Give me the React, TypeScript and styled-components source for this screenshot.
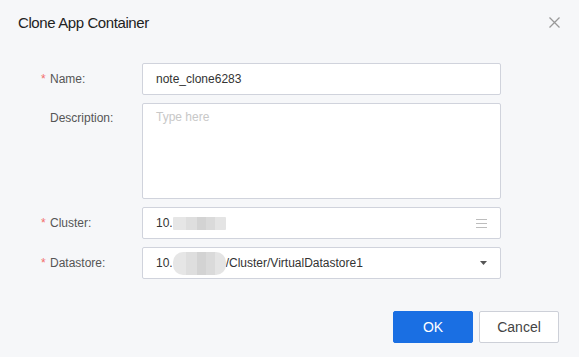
import React from 'react';
import styled, { createGlobalStyle } from 'styled-components';

const GlobalStyle = createGlobalStyle`
  html, body {
    margin: 0;
    padding: 0;
    background: #f6f7f9;
  }
  body {
    font-family: "Liberation Sans", Arial, sans-serif;
  }
`;

const Dialog = styled.div`
  width: 579px;
  height: 357px;
  box-sizing: border-box;
  background: #f6f7f9;
  display: flex;
  flex-direction: column;
`;

const Header = styled.div`
  height: 44px;
  display: flex;
  align-items: center;
  justify-content: space-between;
  padding: 0 19px 0 18px;
`;

const Title = styled.h2`
  margin: 0;
  font-size: 15px;
  font-weight: normal;
  letter-spacing: -0.4px;
  color: #222;
`;

const CloseButton = styled.button`
  border: 0;
  background: none;
  padding: 0;
  width: 12px;
  height: 12px;
  display: flex;
  align-items: center;
  justify-content: center;
  cursor: pointer;
`;

const Form = styled.div`
  display: flex;
  flex-direction: column;
  gap: 8px;
  margin-top: 19px;
  padding-left: 20px;
`;

const Row = styled.div<{ $top?: boolean }>`
  display: grid;
  grid-template-columns: 122px 359px;
  align-items: ${(p) => (p.$top ? 'start' : 'center')};
`;

const Label = styled.label<{ $top?: boolean }>`
  display: flex;
  align-items: center;
  font-size: 12px;
  color: #555;
  padding-left: 21px;
  padding-top: ${(p) => (p.$top ? '8px' : '0')};
`;

const Star = styled.span<{ $hidden?: boolean }>`
  color: #f26d6d;
  width: 9px;
  font-size: 12px;
  visibility: ${(p) => (p.$hidden ? 'hidden' : 'visible')};
`;

const Field = styled.div<{ $tall?: boolean }>`
  box-sizing: border-box;
  height: ${(p) => (p.$tall ? '96px' : '32px')};
  background: #fff;
  border: 1px solid #d0d3dc;
  border-radius: 2px;
  display: flex;
  align-items: ${(p) => (p.$tall ? 'flex-start' : 'center')};
  justify-content: space-between;
  padding: ${(p) => (p.$tall ? '6px 13px' : '0 13px')};
  font-size: 12px;
  color: #333;
`;

const Placeholder = styled.span`
  color: #c8c8c8;
`;

const Value = styled.span`
  display: flex;
  align-items: center;
  white-space: nowrap;
`;

const Blur = styled.span<{ $tall?: boolean }>`
  display: inline-block;
  width: 53px;
  height: ${(p) => (p.$tall ? '23px' : '13px')};
  border-radius: ${(p) => (p.$tall ? '10px' : '1px')};
  background: linear-gradient(
    90deg,
    #e6e6e6 0 25%,
    #dedede 25% 45%,
    #d3d3d3 45% 62%,
    #dadada 62% 80%,
    #e4e4e4 80% 100%
  );
  filter: blur(0.4px);
`;

const Footer = styled.div`
  display: flex;
  justify-content: flex-end;
  gap: 6px;
  margin-top: 32px;
  padding-right: 20px;
`;

const Button = styled.button<{ $primary?: boolean }>`
  width: 80px;
  height: 32px;
  box-sizing: border-box;
  border-radius: 2px;
  font-family: "Liberation Sans", Arial, sans-serif;
  font-size: 14px;
  cursor: pointer;
  border: 1px solid ${(p) => (p.$primary ? '#1a6fe3' : '#cdd0d8')};
  background: ${(p) => (p.$primary ? '#1a6fe3' : '#fff')};
  color: ${(p) => (p.$primary ? '#fff' : '#444')};
`;

const ListIcon = () => (
  <svg width="11" height="9" viewBox="0 0 11 9">
    <path d="M0 0.5h11M0 4.5h11M0 8.5h11" stroke="#bdbdbd" strokeWidth="1" />
  </svg>
);

const CaretIcon = () => (
  <svg width="7" height="4" viewBox="0 0 7 4">
    <path d="M0 0h7L3.5 4z" fill="#555" />
  </svg>
);

const CloseIcon = () => (
  <svg width="11" height="11" viewBox="0 0 11 11">
    <path d="M0.5 0.5l10 10M10.5 0.5l-10 10" stroke="#999" strokeWidth="1.3" />
  </svg>
);

const App: React.FC = () => {
  return (
    <>
      <GlobalStyle />
      <Dialog>
        <Header>
          <Title>Clone App Container</Title>
          <CloseButton aria-label="Close">
            <CloseIcon />
          </CloseButton>
        </Header>

        <Form>
          <Row>
            <Label>
              <Star>*</Star>Name:
            </Label>
            <Field>
              <Value>note_clone6283</Value>
            </Field>
          </Row>

          <Row $top>
            <Label $top>
              <Star $hidden>*</Star>Description:
            </Label>
            <Field $tall>
              <Placeholder>Type here</Placeholder>
            </Field>
          </Row>

          <Row>
            <Label>
              <Star>*</Star>Cluster:
            </Label>
            <Field>
              <Value>
                10.<Blur />
              </Value>
              <ListIcon />
            </Field>
          </Row>

          <Row>
            <Label>
              <Star>*</Star>Datastore:
            </Label>
            <Field>
              <Value>
                10.<Blur $tall />/Cluster/VirtualDatastore1
              </Value>
              <CaretIcon />
            </Field>
          </Row>
        </Form>

        <Footer>
          <Button $primary>OK</Button>
          <Button>Cancel</Button>
        </Footer>
      </Dialog>
    </>
  );
};

export default App;
